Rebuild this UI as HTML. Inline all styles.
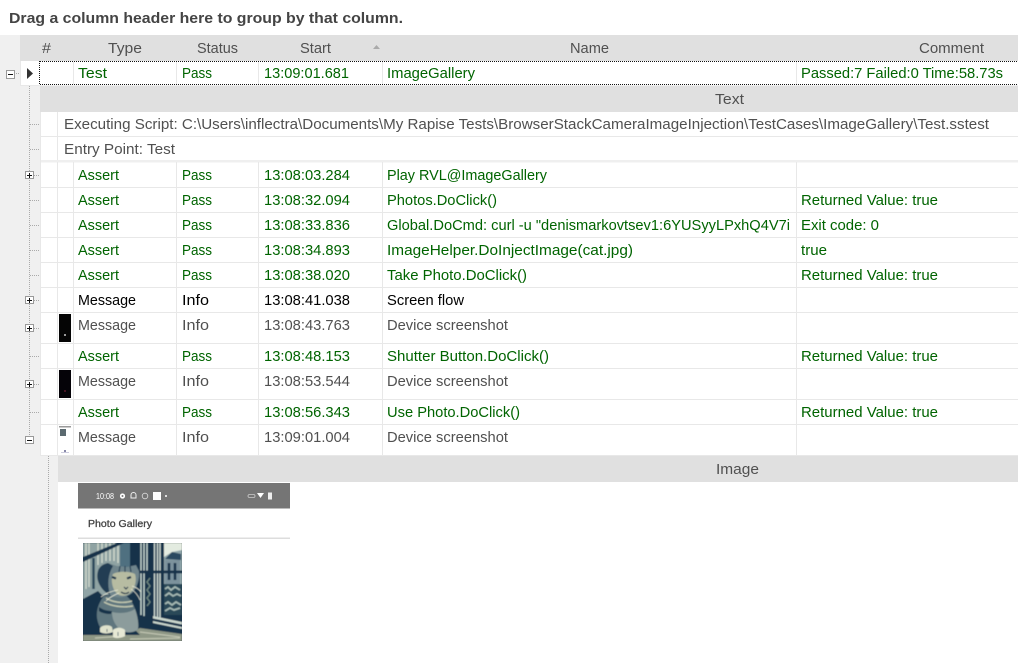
<!DOCTYPE html>
<html><head><meta charset="utf-8"><style>
html,body{margin:0;padding:0;background:#fff;width:1018px;height:663px;overflow:hidden}
svg{display:block}
text{font-family:"Liberation Sans",sans-serif;font-size:15px;white-space:pre}
.h{fill:#505050}.g{fill:#006400}.m{fill:#505050}.k{fill:#000}
.ln{stroke:#e8e8e8;stroke-width:1;fill:none;shape-rendering:crispEdges}
.dot{stroke:#aaa;stroke-width:1;stroke-dasharray:1 1;fill:none;shape-rendering:crispEdges}
.dk{stroke:#111;stroke-width:1;stroke-dasharray:1 1;fill:none;shape-rendering:crispEdges}
.box{fill:#fff;stroke:#999;stroke-width:1;shape-rendering:crispEdges}
.sign{stroke:#111;stroke-width:1;fill:none;shape-rendering:crispEdges}
</style></head><body>
<svg width="1018" height="663" viewBox="0 0 1018 663" xmlns="http://www.w3.org/2000/svg">
<rect x="0" y="35" width="1018" height="628" fill="#f0f0f0"/>
<rect x="40" y="86" width="978" height="577" fill="#fff"/>
<rect x="20" y="35" width="998" height="26" fill="#e0e0e0"/>
<rect x="20" y="61" width="998" height="24" fill="#fff"/>
<text x="9" y="23" textLength="394" lengthAdjust="spacingAndGlyphs" style="font-weight:bold;font-size:15px" fill="#444">Drag a column header here to group by that column.</text>
<g class="h">
<text x="42" y="53" textLength="9" lengthAdjust="spacingAndGlyphs">#</text><text x="108" y="53" textLength="34" lengthAdjust="spacingAndGlyphs">Type</text>
<text x="197" y="53" textLength="41" lengthAdjust="spacingAndGlyphs">Status</text><text x="300" y="53" textLength="31" lengthAdjust="spacingAndGlyphs">Start</text>
<text x="570" y="53" textLength="39" lengthAdjust="spacingAndGlyphs">Name</text><text x="919" y="53" textLength="65" lengthAdjust="spacingAndGlyphs">Comment</text>
</g>
<path d="M373 49l3.500-4 3.500 4z" fill="#aaa"/>
<path class="ln" d="M20.500 61V85M20 85.500H40"/>
<path d="M27 68v11l6-5.500z" fill="#333"/>
<path class="ln" d="M73.500 62V84M176.500 62V84M258.500 62V84M382.500 62V84M796.500 62V84"/>
<path class="dk" d="M40 61.500H1018M40 84.500H1018M39.500 61V85"/>
<g class="g">
<text x="78" y="78" textLength="29" lengthAdjust="spacingAndGlyphs">Test</text><text x="182" y="78" textLength="30" lengthAdjust="spacingAndGlyphs">Pass</text>
<text x="264" y="78" textLength="85" lengthAdjust="spacingAndGlyphs">13:09:01.681</text><text x="387" y="78" textLength="88" lengthAdjust="spacingAndGlyphs">ImageGallery</text>
<text x="801" y="78" textLength="202" lengthAdjust="spacingAndGlyphs">Passed:7 Failed:0 Time:58.73s</text>
</g>
<rect x="40" y="86" width="978" height="26" fill="#e0e0e0"/>
<text class="h" x="715" y="104" textLength="29" lengthAdjust="spacingAndGlyphs">Text</text>
<text class="m" x="64" y="129" textLength="925" lengthAdjust="spacingAndGlyphs">Executing Script: C:\Users\inflectra\Documents\My Rapise Tests\BrowserStackCameraImageInjection\TestCases\ImageGallery\Test.sstest</text>
<text class="m" x="64" y="154" textLength="111" lengthAdjust="spacingAndGlyphs">Entry Point: Test</text>
<path class="ln" d="M40 136.500H1018M57.500 112V162"/>
<rect x="40" y="160" width="978" height="2.500" fill="#efefef"/>
<path class="ln" d="M40 187.500H1018M40 212.500H1018M40 237.500H1018M40 262.500H1018M40 287.500H1018M40 312.500H1018M40 343.500H1018M40 368.500H1018M40 399.500H1018M40 424.500H1018M40 455.500H1018"/>
<path class="ln" d="M40.500 112V456M57.500 162V456M73.500 162V456M176.500 162V456M258.500 162V456M382.500 162V456M796.500 162V456"/>
<g class="g">
<text x="78" y="180" textLength="41" lengthAdjust="spacingAndGlyphs">Assert</text><text x="182" y="180" textLength="30" lengthAdjust="spacingAndGlyphs">Pass</text><text x="264" y="180" textLength="86" lengthAdjust="spacingAndGlyphs">13:08:03.284</text><text x="387" y="180" textLength="160" lengthAdjust="spacingAndGlyphs">Play RVL@ImageGallery</text>
<text x="78" y="205" textLength="41" lengthAdjust="spacingAndGlyphs">Assert</text><text x="182" y="205" textLength="30" lengthAdjust="spacingAndGlyphs">Pass</text><text x="264" y="205" textLength="86" lengthAdjust="spacingAndGlyphs">13:08:32.094</text><text x="387" y="205" textLength="110" lengthAdjust="spacingAndGlyphs">Photos.DoClick()</text><text x="801" y="205" textLength="137" lengthAdjust="spacingAndGlyphs">Returned Value: true</text>
<text x="78" y="230" textLength="41" lengthAdjust="spacingAndGlyphs">Assert</text><text x="182" y="230" textLength="30" lengthAdjust="spacingAndGlyphs">Pass</text><text x="264" y="230" textLength="86" lengthAdjust="spacingAndGlyphs">13:08:33.836</text><text x="387" y="230" textLength="403" lengthAdjust="spacingAndGlyphs">Global.DoCmd: curl -u "denismarkovtsev1:6YUSyyLPxhQ4V7i</text><text x="801" y="230" textLength="78" lengthAdjust="spacingAndGlyphs">Exit code: 0</text>
<text x="78" y="255" textLength="41" lengthAdjust="spacingAndGlyphs">Assert</text><text x="182" y="255" textLength="30" lengthAdjust="spacingAndGlyphs">Pass</text><text x="264" y="255" textLength="86" lengthAdjust="spacingAndGlyphs">13:08:34.893</text><text x="387" y="255" textLength="246" lengthAdjust="spacingAndGlyphs">ImageHelper.DoInjectImage(cat.jpg)</text><text x="801" y="255" textLength="26" lengthAdjust="spacingAndGlyphs">true</text>
<text x="78" y="280" textLength="41" lengthAdjust="spacingAndGlyphs">Assert</text><text x="182" y="280" textLength="30" lengthAdjust="spacingAndGlyphs">Pass</text><text x="264" y="280" textLength="86" lengthAdjust="spacingAndGlyphs">13:08:38.020</text><text x="387" y="280" textLength="140" lengthAdjust="spacingAndGlyphs">Take Photo.DoClick()</text><text x="801" y="280" textLength="137" lengthAdjust="spacingAndGlyphs">Returned Value: true</text>
<text x="78" y="361" textLength="41" lengthAdjust="spacingAndGlyphs">Assert</text><text x="182" y="361" textLength="30" lengthAdjust="spacingAndGlyphs">Pass</text><text x="264" y="361" textLength="86" lengthAdjust="spacingAndGlyphs">13:08:48.153</text><text x="387" y="361" textLength="162" lengthAdjust="spacingAndGlyphs">Shutter Button.DoClick()</text><text x="801" y="361" textLength="137" lengthAdjust="spacingAndGlyphs">Returned Value: true</text>
<text x="78" y="417" textLength="41" lengthAdjust="spacingAndGlyphs">Assert</text><text x="182" y="417" textLength="30" lengthAdjust="spacingAndGlyphs">Pass</text><text x="264" y="417" textLength="86" lengthAdjust="spacingAndGlyphs">13:08:56.343</text><text x="387" y="417" textLength="133" lengthAdjust="spacingAndGlyphs">Use Photo.DoClick()</text><text x="801" y="417" textLength="137" lengthAdjust="spacingAndGlyphs">Returned Value: true</text>
</g>
<g class="k"><text x="78" y="305" textLength="58" lengthAdjust="spacingAndGlyphs">Message</text><text x="182" y="305" textLength="27" lengthAdjust="spacingAndGlyphs">Info</text><text x="264" y="305" textLength="86" lengthAdjust="spacingAndGlyphs">13:08:41.038</text><text x="387" y="305" textLength="77" lengthAdjust="spacingAndGlyphs">Screen flow</text></g>
<g class="m">
<text x="78" y="330" textLength="58" lengthAdjust="spacingAndGlyphs">Message</text><text x="182" y="330" textLength="27" lengthAdjust="spacingAndGlyphs">Info</text><text x="264" y="330" textLength="86" lengthAdjust="spacingAndGlyphs">13:08:43.763</text><text x="387" y="330" textLength="121" lengthAdjust="spacingAndGlyphs">Device screenshot</text>
<text x="78" y="386" textLength="58" lengthAdjust="spacingAndGlyphs">Message</text><text x="182" y="386" textLength="27" lengthAdjust="spacingAndGlyphs">Info</text><text x="264" y="386" textLength="86" lengthAdjust="spacingAndGlyphs">13:08:53.544</text><text x="387" y="386" textLength="121" lengthAdjust="spacingAndGlyphs">Device screenshot</text>
<text x="78" y="442" textLength="58" lengthAdjust="spacingAndGlyphs">Message</text><text x="182" y="442" textLength="27" lengthAdjust="spacingAndGlyphs">Info</text><text x="264" y="442" textLength="86" lengthAdjust="spacingAndGlyphs">13:09:01.004</text><text x="387" y="442" textLength="121" lengthAdjust="spacingAndGlyphs">Device screenshot</text>
</g>
<rect x="59" y="314" width="12" height="28" fill="#050505"/><rect x="64" y="334" width="2" height="2" fill="#999"/>
<rect x="59" y="370" width="12" height="28" fill="#050308"/><rect x="64" y="390" width="2" height="2" fill="#412"/>
<rect x="59" y="426" width="12" height="1.500" fill="#999"/><rect x="60" y="429" width="6" height="7" fill="#5b6a70"/><rect x="64" y="450" width="2" height="3" fill="#88a"/><rect x="61" y="452" width="8" height="1" fill="#ccd"/>
<path class="dot" d="M29.500 86V440M30 124.500H40M30 149.500H40M30 175.500H40M30 200.500H40M30 225.500H40M30 250.500H40M30 275.500H40M30 300.500H40M30 328.500H40M30 356.500H40M30 384.500H40M30 412.500H40M16 73.500H20"/>
<rect class="box" x="6.500" y="70.500" width="8" height="8"/><path class="sign" d="M8 74.500H13"/>
<rect class="box" x="25.500" y="171.500" width="8" height="7"/><path class="sign" d="M27 175.500H32M29.500 173V178"/>
<rect class="box" x="25.500" y="296.500" width="8" height="7"/><path class="sign" d="M27 300.500H32M29.500 298V303"/>
<rect class="box" x="25.500" y="324.500" width="8" height="7"/><path class="sign" d="M27 328.500H32M29.500 326V331"/>
<rect class="box" x="25.500" y="380.500" width="8" height="7"/><path class="sign" d="M27 384.500H32M29.500 382V387"/>
<rect class="box" x="25.500" y="436.500" width="8" height="7"/><path class="sign" d="M27 440.500H32"/>
<rect x="0" y="456" width="58" height="207" fill="#f0f0f0"/>
<path class="dot" d="M48.500 456V663"/>
<rect x="58" y="456" width="960" height="26" fill="#e0e0e0"/>
<text class="h" x="716" y="474" textLength="43" lengthAdjust="spacingAndGlyphs">Image</text>
<rect x="78" y="483" width="212" height="25.500" fill="#757575"/>
<text x="96" y="499" style="font-size:8.500px" fill="#fff" textLength="18" lengthAdjust="spacingAndGlyphs">10:08</text>
<circle cx="122.500" cy="496" r="2.600" fill="#fff"/><circle cx="122.500" cy="496" r="1" fill="#757575"/>
<path d="M131 498v-3a2.500 2.500 0 0 1 5 0v3z" fill="none" stroke="#eee"/><circle cx="145" cy="496" r="2.800" fill="none" stroke="#ddd" stroke-width=".8"/>
<rect x="153" y="492" width="8" height="8" fill="#fff"/><circle cx="166" cy="496" r="1" fill="#fff"/>
<rect x="248" y="494.500" width="7" height="3" rx="1.500" fill="none" stroke="#ccc" stroke-width=".8"/><path d="M257 493h7l-3.500 5z" fill="#fff"/><rect x="268" y="492.500" width="4" height="7" fill="#eee"/>
<text x="88" y="527" style="font-size:10px" fill="#444" stroke="#444" stroke-width=".3" textLength="64" lengthAdjust="spacingAndGlyphs">Photo Gallery</text>
<rect x="78" y="537.500" width="212" height="1.500" fill="#ddd"/>
<defs><filter id="bl" x="0" y="0" width="100%" height="100%"><feGaussianBlur stdDeviation="0.45"/></filter><clipPath id="cp"><rect x="83" y="543" width="99" height="98"/></clipPath></defs>
<g clip-path="url(#cp)"><g filter="url(#bl)">
<rect x="80" y="540" width="105" height="104" fill="#14304a"/>
<!-- curtain -->
<rect x="83" y="543" width="38" height="52" fill="#8fa3a3"/>
<path d="M86 543v46M89 543v44M98 543v22M102 543v20M106 543v18M110 543v18M114 543v18M118 543v20" stroke="#d4dccf" stroke-width="1.300"/>
<path d="M93.500 558V592" stroke="#2c4a5c" stroke-width="2.500"/>
<rect x="120" y="543" width="10" height="26" fill="#4f7080"/>
<path d="M83 562L124 543h-7L83 557z" fill="#14304a"/>
<rect x="83" y="589" width="15" height="10" fill="#90a4a6"/>
<!-- window -->
<rect x="138" y="543" width="44" height="84" fill="#14304a"/>
<path d="M141 543v72M144 543v73M147 543v30" stroke="#c6d8d0" stroke-width="1.400"/>
<path d="M150 578l-3 4 3 4-3 4 3 4-3 4 3 4-3 4" stroke="#6f8880" stroke-width="1.400" fill="none"/>
<path d="M154.500 543v74M157.500 543v75M160 543v76" stroke="#d2ded4" stroke-width="1.400"/>
<rect x="164" y="543" width="18" height="70" fill="#8ea4a8"/>
<path d="M164 543h18v7l-10 2-8 5z" fill="#e3ebe0"/>
<path d="M165 559l7-7 9 2v6z" fill="#2c4a60"/>
<rect x="165" y="560" width="15" height="24" fill="#7b929c"/>
<path d="M169 563v17M175 563v17" stroke="#14304a" stroke-width="2.500"/>
<rect x="164" y="584" width="18" height="31" fill="#2a4858"/>
<path d="M165 589l3-2 3 3 4-3 5 3M165 596l4-3 4 3 4-2 4 2M165 604l3-2 4 3 4-3 5 3M165 611l5-3 4 2 6-2" stroke="#a4b8b2" stroke-width="1.800" fill="none"/>
<rect x="134" y="570.500" width="48" height="2.800" fill="#14304a"/>
<rect x="161.500" y="543" width="2.500" height="78" fill="#14304a"/>
<path d="M153 616l29 6v2.500l-29-6zM153 621l29 6v2l-29-6z" fill="#cdd9cf"/>
<!-- floor -->
<path d="M83 635l45-2 12-5 42 6v7H83z" fill="#8f9886"/>
<path d="M95 638l30-2M140 632l40 5M130 639l50-1" stroke="#c8ccb8" stroke-width="1" fill="none"/>
<!-- dark body backdrop -->
<path d="M83 599l15-8 42 44H83z" fill="#14304a"/>
<!-- body -->
<path d="M104 596c-5 6-8 14-7 22 1 7 4 12 8 14l33-2c1-8-1-18-5-26-2-4-5-7-8-9z" fill="#5f767e"/>
<path d="M112 612c8 2 17 1 23-3 2 6 4 13 3 20-2 3-8 4-13 3-8-3-13-11-13-20z" fill="#8c9c9c"/>
<path d="M99 607c4 3 8 4 13 4l-1 3c-5 0-9-1-12-3z" fill="#14304a"/>
<path d="M106 598c6 4 16 6 26 3M104 602c7 4 18 6 29 4" stroke="#c3c8b0" stroke-width="1.400" fill="none"/>
<!-- head -->
<path d="M98 571c1-4 5-7 10-8l9 3 10 1 9-2 3 6c1 8-2 17-7 22-5 4-11 5-17 4-8-2-14-8-16-15-1-4-1-8-1-11z" fill="#70858c"/>
<path d="M98 571c1-4 5-7 10-8l5 3c-5 8-6 18-3 29-6-3-10-8-12-14-1-3-1-7 0-10z" fill="#223d52"/>
<path d="M113 574c5-3 16-3 22 0 2 6 0 13-3 17-3 4-8 6-13 4-6-3-9-14-6-21z" fill="#b7bca2"/>
<path d="M120 566l-1 6M125 566v6M130 566l1 6" stroke="#223d52" stroke-width="1.100"/>
<path d="M112 577l4 1.500M127 578.500l4-1.500" stroke="#14304a" stroke-width="2.200"/>
<path d="M124 587l2 2 2-2M121 592c3 2 6 2 8 0" stroke="#14304a" stroke-width="1.100" fill="none"/>
<path d="M118 590c-6 1-12 3-17 7M119 593c-5 2-9 4-13 8M131 589c3 2 7 6 9 11M132 586c3 1 7 3 9 6" stroke="#e8ead8" stroke-width=".7" fill="none"/>
<!-- paws -->
<path d="M100 628c2-3 9-4 12-1l1 5c-4 2-10 2-13 0z" fill="#dfe2cc"/>
<path d="M113 630c3-3 9-3 12 0l0 6c-3 2-9 3-12 1z" fill="#e6e8d4"/>
<path d="M118 632v4M107 629v3" stroke="#445a64" stroke-width=".8"/>
</g></g>
</svg>
</body></html>
